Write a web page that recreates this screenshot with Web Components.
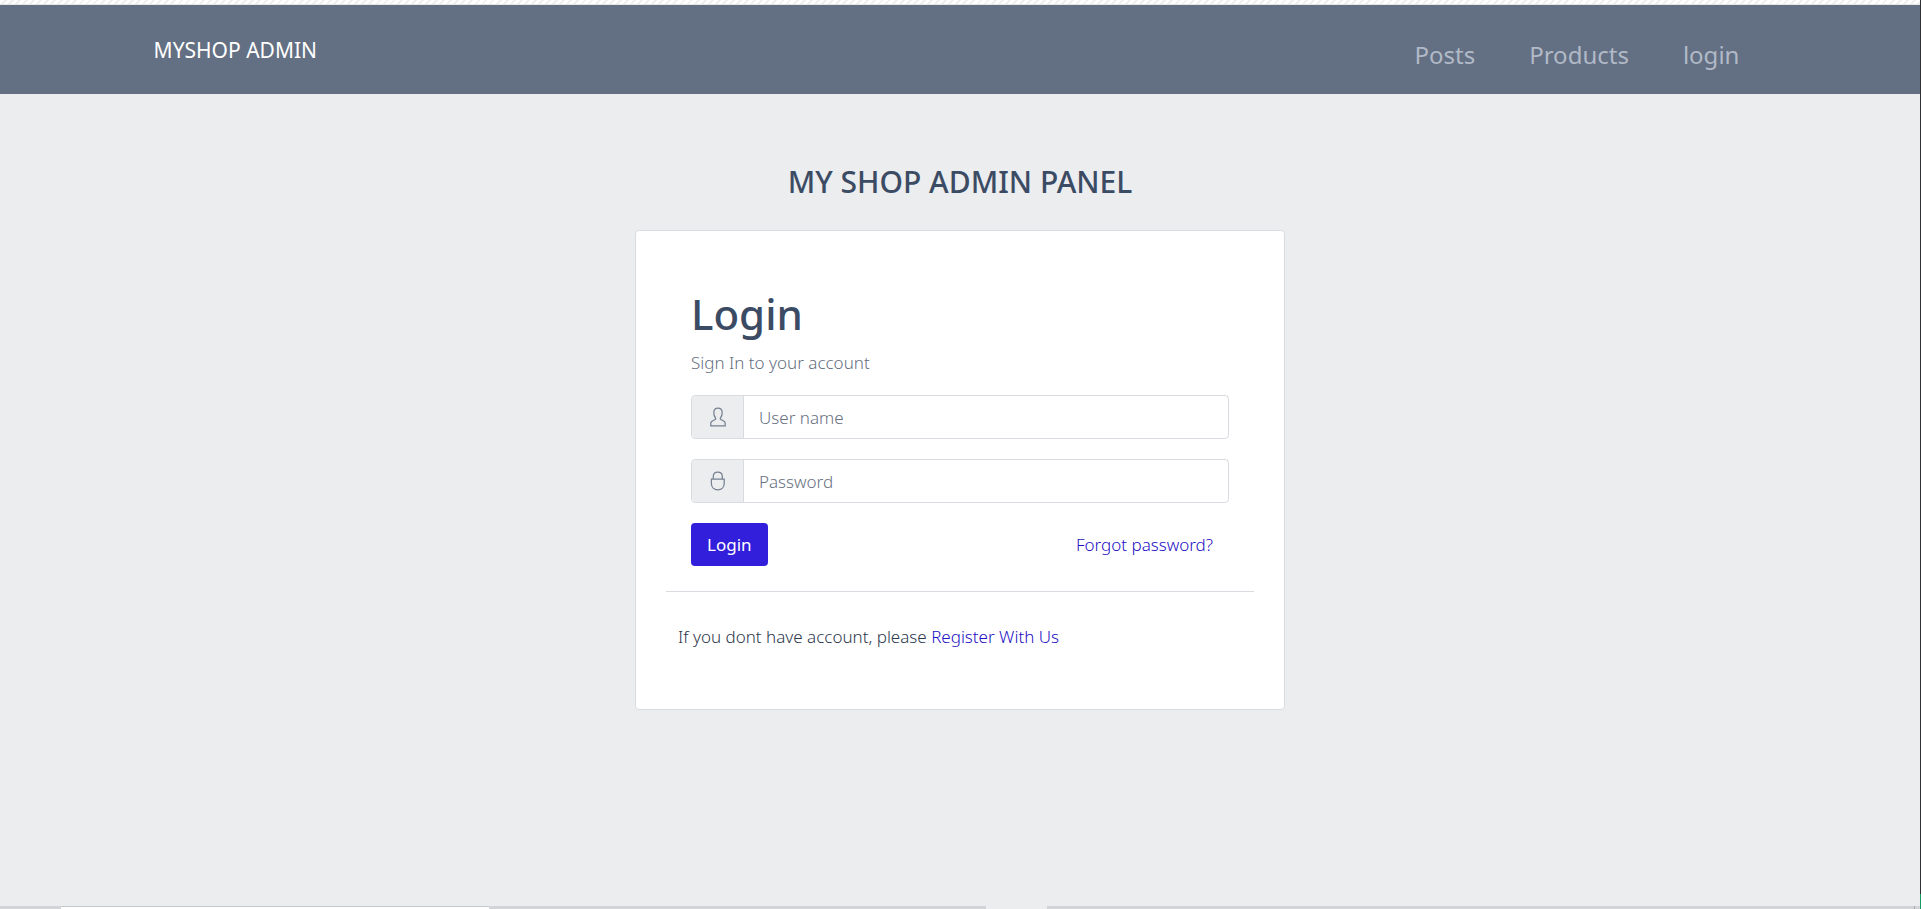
<!DOCTYPE html>
<html lang="en">
<head>
<meta charset="utf-8">
<meta name="viewport" content="width=device-width, initial-scale=1">
<title>MyShop Admin</title>
<style>
  html, body { margin: 0; }
  body {
    font-family: "Noto Sans", "Open Sans", sans-serif;
    font-size: 17px; line-height: 26px; color: #3c4b64; background: #ebedef;
  }
</style>
</head>
<body>
<app-shell>
  <site-header slot="header" brand="MYSHOP ADMIN">
    <nav-link href="#posts">Posts</nav-link>
    <nav-link href="#products">Products</nav-link>
    <nav-link href="#login">login</nav-link>
  </site-header>
  <login-panel heading="MY SHOP ADMIN PANEL"></login-panel>
  <window-edge slot="footer"></window-edge>
</app-shell>

<script>
const define = (name, html, setup) => {
  const template = document.createElement('template');
  template.innerHTML = html;
  customElements.define(name, class extends HTMLElement {
    constructor() {
      super();
      this.attachShadow({ mode: 'open' }).append(template.content.cloneNode(true));
    }
    connectedCallback() { if (setup) setup(this, this.shadowRoot); }
  });
};

define('app-shell', `
  <style>
    :host { display: flex; min-height: 100vh; }
    .page { flex: 1; min-width: 0; display: flex; flex-direction: column; }
    .top { height: 4px; border-bottom: 1px solid #e4e6e8;
      background: repeating-linear-gradient(135deg, #fff 0 3px, #eef0ec 3px 5px); }
    main { flex: 1; }
    .edge { width: 1px; background: linear-gradient(to top, #159a64 15px, #303134 15px); }
  </style>
  <div class="page">
    <div class="top"></div>
    <slot name="header"></slot>
    <main><slot></slot></main>
    <slot name="footer"></slot>
  </div>
  <div class="edge"></div>`);

define('site-header', `
  <style>
    :host { display: block; background: #636f83; }
    header { display: flex; justify-content: space-between; align-items: center;
      height: 89px; padding: 0 8%; }
    .brand { color: #fff; font-size: 21px; line-height: 32px; text-decoration: none; }
    nav { display: flex; padding-top: 10px; }
  </style>
  <header><a class="brand" href="#home"></a><nav><slot></slot></nav></header>`,
  (el, root) => { root.querySelector('.brand').textContent = el.getAttribute('brand'); });

define('nav-link', `
  <style>
    :host { display: block; }
    a { display: block; padding: 0 27px; font-size: 24px; line-height: 38px;
      color: #b1b9c7; text-decoration: none; }
  </style>
  <a><slot></slot></a>`,
  (el, root) => { root.querySelector('a').href = el.getAttribute('href'); });

define('icon-field', `
  <style>
    :host { display: block; }
    .group { display: flex; height: 42px; border: 1px solid #d8dbe0; border-radius: 4px;
      overflow: hidden; background: #fff; }
    label { width: 51px; display: grid; place-items: center; background: #ebedef;
      border-right: 1px solid #d8dbe0; color: #768192; }
    input { flex: 1; min-width: 0; border: 0; outline: 0; padding: 2px 15px 0; background: none;
      font: inherit; color: #5c6873; }
    input::placeholder { color: #68717f; opacity: 1; }
    svg { display: block; width: 18px; height: 20px; fill: none; stroke: currentColor; stroke-width: 1.25; }
  </style>
  <div class="group">
    <label for="field"><svg viewBox="0 0 18 20" aria-hidden="true"><path/></svg></label>
    <input id="field">
  </div>`,
  (el, root) => {
    const shapes = {
      user: 'M6.6 11.2C5.3 9.6 4.7 7.7 4.8 5.3C4.9 2.7 6.5 1.1 9 1.1S13.1 2.7 13.2 5.3C13.3 7.7 12.7 9.6 11.4 11.2V12.2L15 14.2C15.8 14.7 16.2 15.3 16.2 16.2V18.8H1.8V16.2C1.8 15.3 2.2 14.7 3 14.2L6.6 12.2Z',
      lock: 'M4.3 8V5.6C4.3 2.9 6.1 1.2 8.8 1.2S13.3 2.9 13.3 5.6V8M2.4 8H15.2V12.6C15.2 16.4 12.6 18.8 8.8 18.8S2.4 16.4 2.4 12.6Z'
    };
    root.querySelector('path').setAttribute('d', shapes[el.getAttribute('icon')]);
    const input = root.querySelector('input');
    input.type = el.getAttribute('type');
    input.placeholder = el.getAttribute('label');
    root.querySelector('label').setAttribute('aria-label', el.getAttribute('label'));
  });

define('text-link', `
  <style>
    :host { display: inline; }
    a { color: #2410c4; text-decoration: none; }
  </style>
  <a><slot></slot></a>`,
  (el, root) => { root.querySelector('a').href = el.getAttribute('href'); });

define('login-panel', `
  <style>
    :host { display: block; padding: 69px 16px 40px; }
    h1, h2, p { margin: 0; font-weight: 500; }
    h1 { font-size: 30px; line-height: 38px; text-align: center; margin-bottom: 29px; }
    .card { box-sizing: border-box; max-width: 650px; margin: 0 auto; padding: 57px 30px 59px;
      background: #fff; border: 1px solid #d8dbe0; border-radius: 4px; font-weight: 300; }
    form { padding: 0 25px; display: flex; flex-direction: column; }
    h2 { font-size: 42px; line-height: 52px; margin-bottom: 10px; }
    .lead { font-weight: 300; color: #656f80; margin-bottom: 19px; }
    icon-field { margin-bottom: 20px; }
    .actions { display: flex; justify-content: space-between; align-items: center; padding-right: 16px; }
    button { height: 43px; padding: 0 16px; border: 0; border-radius: 4px; background: #321fdb;
      color: #fff; font: inherit; font-weight: 400; }
    hr { border: 0; border-top: 1px solid #d8dbe0; margin: 25px 0 32px; }
    .join { font-weight: 300; padding: 0 12px; color: #2c384c; }
  </style>
  <h1></h1>
  <section class="card">
    <form>
      <h2>Login</h2>
      <p class="lead">Sign In to your account</p>
      <icon-field icon="user" type="text" label="User name"></icon-field>
      <icon-field icon="lock" type="password" label="Password"></icon-field>
      <div class="actions">
        <button type="button">Login</button>
        <text-link href="#forgot">Forgot password?</text-link>
      </div>
    </form>
    <hr>
    <p class="join">If you dont have account, please <text-link href="#register">Register With Us</text-link></p>
  </section>`,
  (el, root) => { root.querySelector('h1').textContent = el.getAttribute('heading'); });

define('window-edge', `
  <style>
    :host { display: grid; grid-template-columns: 61fr 428fr 497fr 61fr 867fr 1px 5px; height: 3px; background: #d2d4d7; }
    .tab { grid-column: 2; background: #fff; border-top: 1px solid #c4c8ca; }
    .gap { grid-column: 4; background: #ebedef; }
    .tick { grid-column: 6; background: #a9abae; }
  </style>
  <div class="tab"></div><div class="gap"></div><div class="tick"></div>`);
</script>
</body>
</html>
